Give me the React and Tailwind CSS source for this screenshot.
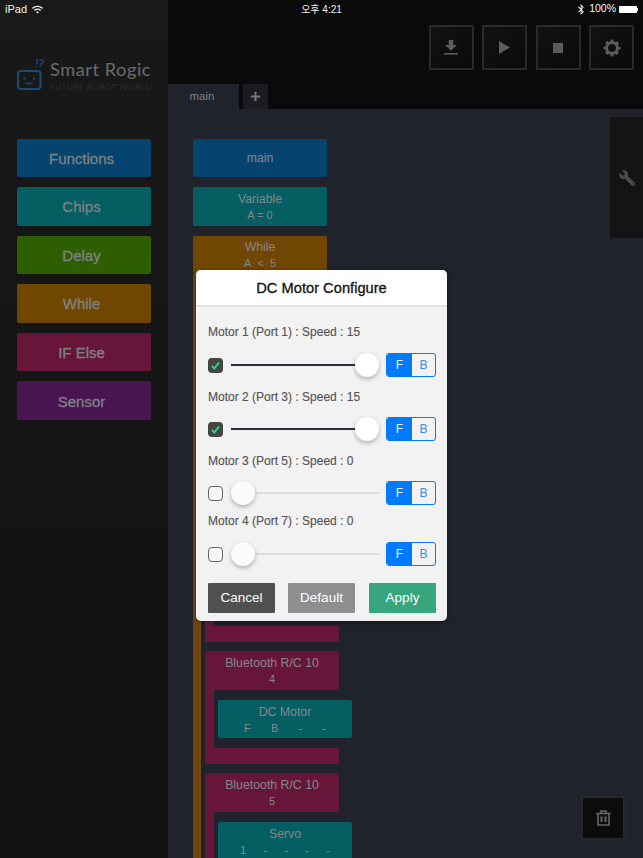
import { FaBluetoothB, FaPlus, FaWifi, FaWrench } from 'react-icons/fa'

const FONT = "font-['Liberation_Sans',Arial,sans-serif]"

const PALETTE = [
  ['Functions', 'bg-[#05446e]'],
  ['Chips', 'bg-[#045e62]'],
  ['Delay', 'bg-[#2d5f02]'],
  ['While', 'bg-[#714601]'],
  ['IF Else', 'bg-[#67163a]'],
  ['Sensor', 'bg-[#491552]'],
]

const MOTORS = [
  { label: 'Motor 1 (Port 1) : Speed : 15', on: true, top: 'mt-0', labelGap: 'mt-[14px]' },
  { label: 'Motor 2 (Port 3) : Speed : 15', on: true, top: 'mt-[13px]', labelGap: 'mt-[13px]' },
  { label: 'Motor 3 (Port 5) : Speed : 0', on: false, top: 'mt-[13px]', labelGap: 'mt-[13px]' },
  { label: 'Motor 4 (Port 7) : Speed : 0', on: false, top: 'mt-[9px]', labelGap: 'mt-[14px]' },
]

const Block = ({ title, sub, color, cols, colsWidth }) => (
  <div className={`flex h-[38.6px] w-[134px] shrink-0 flex-col items-center justify-center rounded-[2px] text-[#85888b] ${color} ${!sub && !cols ? 'pt-[2px]' : ''}`}>
    {title && <div className="text-[12.3px] leading-[15px]">{title}</div>}
    {sub && <div className="mt-[2px] text-[11px] leading-[12px]">{sub}</div>}
    {cols && (
      <div className={`mt-[2px] flex justify-between text-[11px] leading-[12px] ${colsWidth}`}>
        {cols.map((c, i) => <span key={i}>{c}</span>)}
      </div>
    )}
  </div>
)

// the first three sit fully behind the dialog, so they hold no text
const Bluetooth = ({ n, child }) => (
  <div className="flex w-[147px] flex-col">
    <Block title={n && 'Bluetooth R/C 10'} sub={n} color="bg-[#67163a]" />
    <div className="flex">
      <div className="w-[9px] bg-[#67163a]" />
      <div className="py-[10px] pl-[4px]">{child}</div>
    </div>
    <div className="h-[16px] w-[134px] bg-[#67163a]" />
  </div>
)

const HiddenBluetooth = () => <Bluetooth child={<Block color="bg-[#045e62]" />} />

const ToolButton = ({ children }) => (
  <div className="flex h-[45px] w-[45px] items-center justify-center border-2 border-[#2a2a2a] bg-gradient-to-br from-[#121212] to-[#0a0a0a]">
    {children}
  </div>
)

const Slider = ({ on }) => (
  <div className="relative ml-[8px] h-[24px] w-[148px]">
    <div className={`absolute left-0 right-0 top-[11px] h-[2px] ${on ? 'bg-[#2a2f3a]' : 'bg-[#dcdcdc]'}`} />
    <div className={`absolute top-0 h-[24px] w-[24px] rounded-full shadow-[0_2px_4px_rgba(0,0,0,0.28)] ${on ? 'right-0 bg-white' : 'left-0 bg-[#fbfbfb]'}`} />
  </div>
)

function MotorRow({ motor }) {
  return (
    <div className={motor.top}>
      <div className="text-[12px] leading-[14px] text-[#555555] [-webkit-text-stroke:0.15px_#555555]">{motor.label}</div>
      <div className={`flex items-center ${motor.labelGap}`}>
        {motor.on ? (
          <div className="flex h-[15px] w-[15px] items-center justify-center rounded-[4px] bg-[#444444]">
            <svg width="11" height="11" viewBox="0 0 11 11" fill="none">
              <path d="M1.8 5.8 L4.3 8.5 L9.2 2.4" stroke="#2ed47a" strokeWidth="1.9" />
            </svg>
          </div>
        ) : (
          <div className="h-[15px] w-[15px] rounded-[4px] border border-[#666666] bg-[#f6f6f6]" />
        )}
        <Slider on={motor.on} />
        <div className="ml-[7px] flex h-[24px] w-[50px] overflow-hidden rounded-[3px] border border-[#007aff] text-[12px]">
          <div className="flex w-[25px] items-center justify-center bg-[#007aff] text-white/90">F</div>
          <div className="flex flex-1 items-center justify-center text-[#3b8ff0]">B</div>
        </div>
      </div>
    </div>
  )
}

export default function App() {
  return (
    <div className={`relative flex h-[858px] w-[643px] overflow-hidden bg-[#20232b] ${FONT}`}>
      {/* status bar */}
      <div className="absolute left-0 right-0 top-0 z-20 flex h-[18px] items-center justify-between pl-[5px] pr-[5px] text-[11px] text-[#f4f4f4]">
        <div className="flex w-[140px] items-center gap-[5px]">
          <span>iPad</span>
          <FaWifi className="h-[9px] w-[11px]" />
        </div>
        <span className="font-['Liberation_Sans','Noto_Sans_CJK_KR',sans-serif] text-[10px]">오후 4:21</span>
        <div className="flex w-[140px] items-center justify-end">
          <FaBluetoothB className="h-[11px] w-[8px]" />
          <span className="ml-[4px] text-[10.5px]">100%</span>
          <div className="ml-[3px] h-[7px] w-[18px] rounded-[1px] bg-white" />
          <div className="h-[3px] w-[1px] bg-white" />
        </div>
      </div>

      <aside className="flex w-[168px] shrink-0 flex-col bg-gradient-to-b from-[#191919] via-[#141414] to-[#121212]">
        <div className="flex h-[138.5px] items-start pl-[17px] pt-[60px]">
          <div className="relative mt-[10px] h-[20px] w-[33px]">
            <svg width="25" height="20" viewBox="0 0 25 20" fill="none" className="absolute left-0 top-0">
              <rect x="1" y="1" width="22.5" height="18" rx="3" stroke="#1b4b72" strokeWidth="2" />
              <circle cx="7.5" cy="8.5" r="1.2" fill="#1b4b72" />
              <circle cx="17" cy="8.5" r="1.2" fill="#1b4b72" />
              <path d="M9 13.5 H15.5" stroke="#1b4b72" strokeWidth="1.6" />
            </svg>
            <span className="absolute left-[18px] top-[-11px] text-[10px] font-bold italic leading-[10px] text-[#1b4b72]">!?</span>
          </div>
          <div className="font-['Lato',sans-serif]">
            <div className="text-[18.2px] leading-[19px] tracking-[0.55px] text-[#6c6c6c]">Smart Rogic</div>
            <div className="mt-[3px] whitespace-nowrap text-[8.2px] leading-[10px] tracking-[0.45px] text-[#2e2e2e]">FUTURE ROBOT WORLD</div>
          </div>
        </div>
        <div className="flex flex-col gap-[10px] pl-[17px]">
          {PALETTE.map(([name, color]) => (
            <div key={name} className={`flex h-[38.6px] w-[134px] items-center justify-center rounded-[2px] pr-[5px] pt-[2px] text-[15px] text-[#7f8285] [-webkit-text-stroke:0.3px_#7f8285] ${color}`}>
              {name}
            </div>
          ))}
        </div>
      </aside>

      <main className="flex min-w-0 flex-1 flex-col">
        <header className="flex h-[109px] shrink-0 flex-col bg-[#0a0a0a]">
          <div className="flex justify-end gap-[8.4px] pr-[9px] pt-[25px]">
            <ToolButton>
              <svg width="14" height="15" viewBox="0 0 14 15" fill="#5c5c5c">
                <path d="M4.7 0 H9.3 V5 H13 L7 10.8 L1 5 H4.7 Z" />
                <rect x="0" y="13" width="14" height="1.6" />
              </svg>
            </ToolButton>
            <ToolButton>
              <svg width="11" height="13" viewBox="0 0 11 13" fill="#5c5c5c"><path d="M0 0 L11 6.5 L0 13 Z" /></svg>
            </ToolButton>
            <ToolButton>
              <svg width="10" height="10" viewBox="0 0 10 10" fill="#5c5c5c"><rect width="10" height="10" /></svg>
            </ToolButton>
            <ToolButton>
              <svg width="18" height="18" viewBox="0 0 18 18" fill="none" stroke="#5c5c5c">
                <circle cx="9" cy="9" r="5.4" strokeWidth="3" />
                <circle cx="9" cy="9" r="7.6" strokeWidth="1.8" strokeDasharray="3 2.97" strokeDashoffset="1.5" />
              </svg>
            </ToolButton>
          </div>
          <div className="mt-auto flex h-[25px] gap-[4px]">
            <div className="flex w-[71px] items-center justify-center bg-[#20232b] pr-[3px] text-[11.5px] text-[#7e8084]">main</div>
            <div className="flex w-[25px] items-center justify-center bg-[#1a1c22] text-[#777777]">
              <FaPlus className="h-[11px] w-[11px]" />
            </div>
          </div>
        </header>

        <section className="relative min-h-0 flex-1 pl-[25px] pt-[29.5px]">
          <div className="flex flex-col">
            <Block title="main" color="bg-[#05446e]" />
            <div className="mt-[10px]"><Block title="Variable" sub="A = 0" color="bg-[#045e62]" /></div>
            <div className="mt-[10px]"><Block title="While" sub={'A\u00a0\u00a0<\u00a0\u00a05'} color="bg-[#714601]" /></div>
            <div className="flex">
              <div className="w-[8px] bg-[#70460e]" />
              <div className="flex flex-col gap-[9px] pl-[4px] pt-[10.3px]">
                <HiddenBluetooth />
                <HiddenBluetooth />
                <HiddenBluetooth />
                <Bluetooth n="4" child={<Block title="DC Motor" cols={['F', 'B', '-', '-']} colsWidth="w-[82px]" color="bg-[#045e62]" />} />
                <Bluetooth n="5" child={<Block title="Servo" cols={['1', '-', '-', '-', '-']} colsWidth="w-[90px]" color="bg-[#045e62]" />} />
              </div>
            </div>
          </div>

          {/* tool drawer */}
          <div className="absolute right-0 top-[8px] flex h-[121px] w-[33px] items-center justify-center rounded-l-[1px] bg-[#141414] text-[#4c4c4c]">
            <FaWrench className="h-[16px] w-[16px] -scale-x-100" />
          </div>

          {/* trash */}
          <div className="absolute bottom-[18px] right-[18px] flex h-[44px] w-[44px] items-center justify-center border-2 border-[#26282d] bg-[#0c0c0c]">
            <svg width="15" height="16" viewBox="0 0 15 16" fill="none" stroke="#666666" strokeWidth="1.6">
              <path d="M0.5 3.5 H14.5" />
              <path d="M5 3 V1 H10 V3" />
              <path d="M2 3.5 V15 H13 V3.5" />
              <path d="M5.5 6.5 V12 M9.5 6.5 V12" strokeWidth="2" />
            </svg>
          </div>
        </section>
      </main>

      {/* DC motor dialog */}
      <div className="absolute left-[196px] top-[270px] z-10 flex h-[351px] w-[251px] flex-col overflow-hidden rounded-[5px] bg-[#f2f2f2] shadow-[0_1px_4px_rgba(0,0,0,0.4)]">
        <div className="flex h-[37px] shrink-0 items-center justify-center border-b-2 border-[#e2e2e2] bg-white pt-[1px] text-[14.7px] text-[#111111]">
          <span className="[-webkit-text-stroke:0.3px_#111111]">DC Motor Configure</span>
        </div>
        <div className="pl-[12px] pr-[11px] pt-[18px]">
          {MOTORS.map(m => <MotorRow key={m.label} motor={m} />)}
          <div className="mt-[17px] flex text-[13.5px] text-white">
            <button className="h-[30px] w-[67px] rounded-[1px] bg-[#505050]">Cancel</button>
            <button className="ml-[13px] h-[30px] w-[67px] rounded-[1px] bg-[#8e8e8e]">Default</button>
            <button className="ml-[14px] h-[30px] w-[67px] rounded-[1px] bg-[#37a57d]">Apply</button>
          </div>
        </div>
      </div>
    </div>
  )
}
